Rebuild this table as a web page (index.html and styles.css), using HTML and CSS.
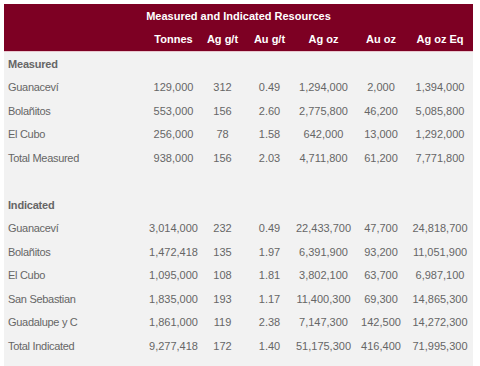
FILE: index.html
```html
<!DOCTYPE html>
<html>
<head>
<meta charset="utf-8">
<link rel="stylesheet" href="styles.css">
</head>
<body>
<table class="res">
  <colgroup>
    <col class="c-label"><col class="c-t"><col class="c-agg"><col class="c-aug"><col class="c-agoz"><col class="c-auoz"><col class="c-eq">
  </colgroup>
  <thead>
    <tr class="title"><th colspan="7">Measured and Indicated Resources</th></tr>
    <tr class="heads"><th></th><th>Tonnes</th><th>Ag g/t</th><th>Au g/t</th><th>Ag oz</th><th>Au oz</th><th>Ag oz Eq</th></tr>
  </thead>
  <tbody>
    <tr class="sec"><td>Measured</td><td></td><td></td><td></td><td></td><td></td><td></td></tr>
    <tr><td>Guanaceví</td><td>129,000</td><td>312</td><td>0.49</td><td>1,294,000</td><td>2,000</td><td>1,394,000</td></tr>
    <tr><td>Bolañitos</td><td>553,000</td><td>156</td><td>2.60</td><td>2,775,800</td><td>46,200</td><td>5,085,800</td></tr>
    <tr><td>El Cubo</td><td>256,000</td><td>78</td><td>1.58</td><td>642,000</td><td>13,000</td><td>1,292,000</td></tr>
    <tr><td>Total Measured</td><td>938,000</td><td>156</td><td>2.03</td><td>4,711,800</td><td>61,200</td><td>7,771,800</td></tr>
    <tr><td></td><td></td><td></td><td></td><td></td><td></td><td></td></tr>
    <tr class="sec"><td>Indicated</td><td></td><td></td><td></td><td></td><td></td><td></td></tr>
    <tr><td>Guanaceví</td><td>3,014,000</td><td>232</td><td>0.49</td><td>22,433,700</td><td>47,700</td><td>24,818,700</td></tr>
    <tr><td>Bolañitos</td><td>1,472,418</td><td>135</td><td>1.97</td><td>6,391,900</td><td>93,200</td><td>11,051,900</td></tr>
    <tr><td>El Cubo</td><td>1,095,000</td><td>108</td><td>1.81</td><td>3,802,100</td><td>63,700</td><td>6,987,100</td></tr>
    <tr><td>San Sebastian</td><td>1,835,000</td><td>193</td><td>1.17</td><td>11,400,300</td><td>69,300</td><td>14,865,300</td></tr>
    <tr><td>Guadalupe y C</td><td>1,861,000</td><td>119</td><td>2.38</td><td>7,147,300</td><td>142,500</td><td>14,272,300</td></tr>
    <tr><td>Total Indicated</td><td>9,277,418</td><td>172</td><td>1.40</td><td>51,175,300</td><td>416,400</td><td>71,995,300</td></tr>
    <tr><td></td><td></td><td></td><td></td><td></td><td></td><td></td></tr>
  </tbody>
</table>
</body>
</html>
```

FILE: styles.css
```css
html, body {
  margin: 0;
  background: #ffffff;
}
body {
  padding: 4px 0 0 4px;
  font-family: "Liberation Sans", Arial, sans-serif;
  font-size: 11px;
}
.res {
  width: 469px;
  table-layout: fixed;
  border-collapse: collapse;
  background: #f2f2f2;
  color: #666666;
}
.c-label { width: 145px; }
.c-t { width: 49px; }
.c-agg { width: 49px; }
.c-aug { width: 45px; }
.c-agoz { width: 63px; }
.c-auoz { width: 52px; }
.c-eq { width: 66px; }
.res th, .res td {
  padding: 0;
  height: 23.5px;
  text-align: center;
  white-space: nowrap;
}
.res thead th {
  background: #7d0023;
  color: #ffffff;
  font-weight: bold;
}
.res thead .heads th {
  border-bottom: 1px solid #e8c8cf;
}
.res td:first-child {
  text-align: left;
  padding-left: 4px;
  letter-spacing: -0.3px;
}
.res .sec td:first-child {
  font-weight: bold;
  letter-spacing: -0.2px;
}
```
